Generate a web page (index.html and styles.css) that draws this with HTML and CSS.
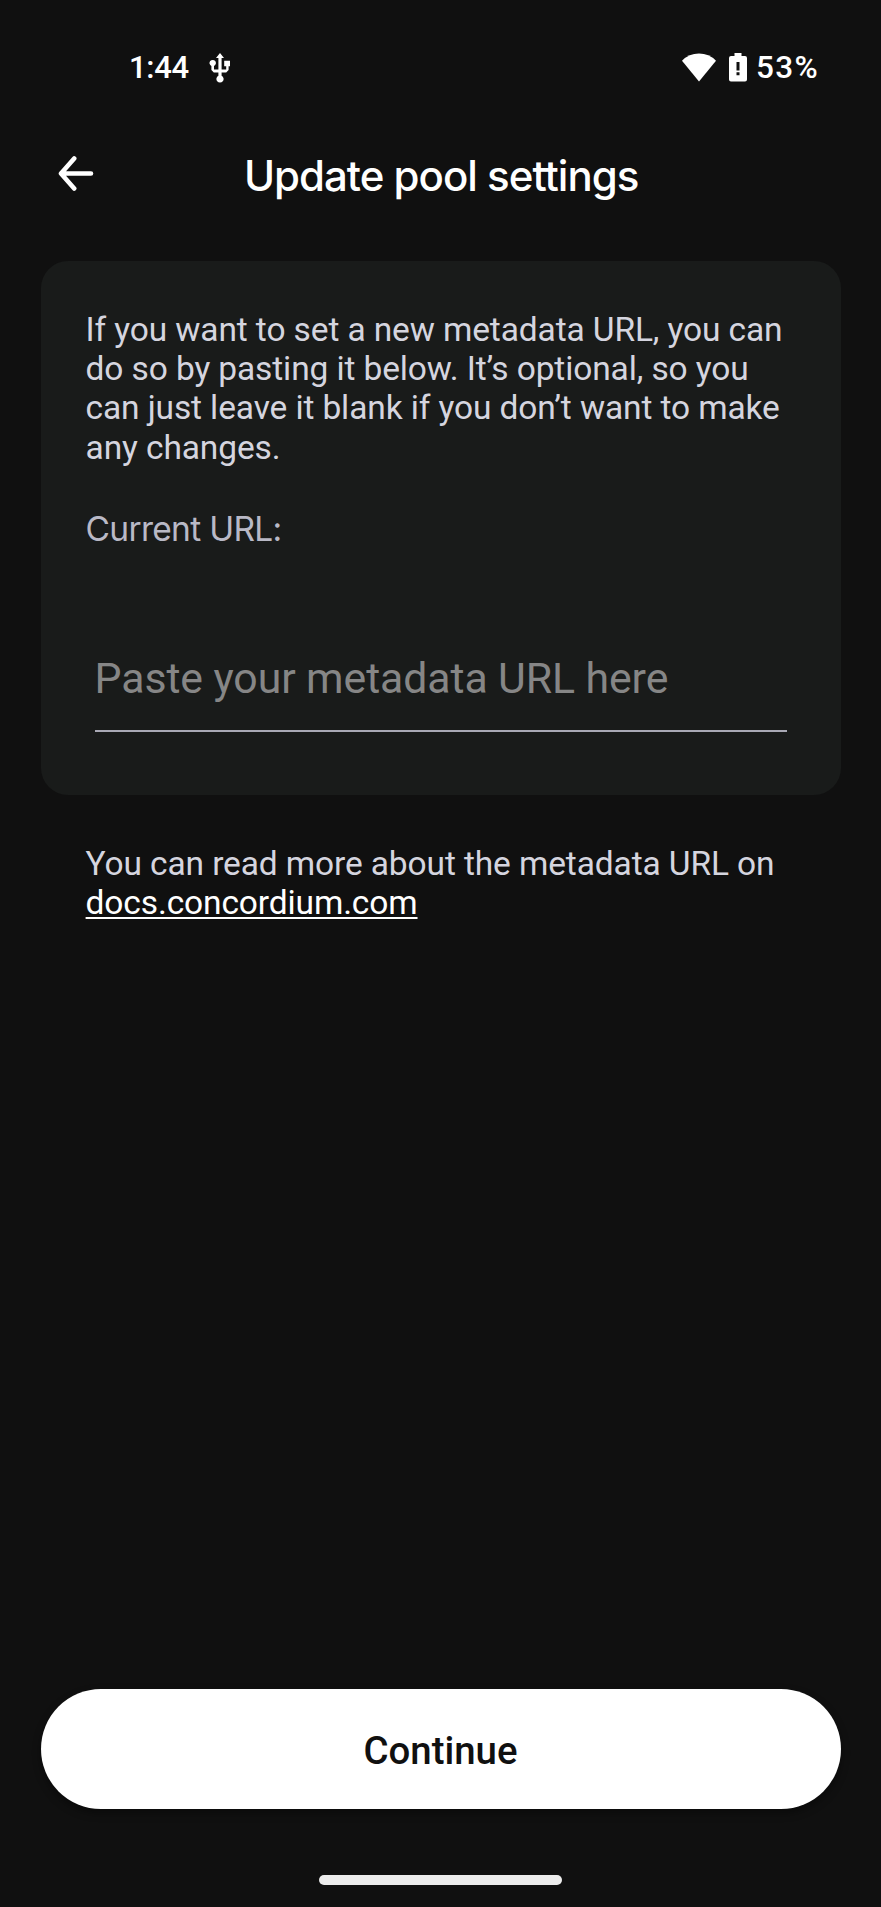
FILE: index.html
```html
<!DOCTYPE html>
<html lang="en">
<head>
<meta charset="utf-8">
<title>Update pool settings</title>
<link rel="stylesheet" href="styles.css">
</head>
<body>
<div class="screen">
  <div class="status">
    <div class="status-left">
      <span class="clock">1:44</span>
      <svg class="usb" width="22" height="32" viewBox="0 0 22 32" fill="#fff">
        <path d="M11 1 15 6H12.600V17.600H17.200V14.200H15.200V8.800H21V14.200H19.600V18L17.200 20.400H12.600V23.800A3.600 3.600 0 1 1 9.400 23.800V20.400H4.800L2.400 18V14A3.200 3.200 0 1 1 5 14V17.600H9.400V6H7Z"/>
      </svg>
    </div>
    <div class="status-right">
      <svg class="wifi" width="34" height="29" viewBox="0 0 34 29" fill="#fff">
        <path d="M17 28.5 0 7.8Q7 .6 17 .6T34 7.8Z"/>
      </svg>
      <svg class="battery" width="18" height="30" viewBox="0 0 18 30">
        <path fill="#fff" d="M5.5 1H12.5V4H16Q18 4 18 6V27.5Q18 29.5 16 29.5H2Q0 29.5 0 27.5V6Q0 4 2 4H5.5Z"/>
        <path fill="#101010" d="M7.5 10H10.500V18.500H7.500ZM7.500 20.300H10.500V23.300H7.500Z"/>
      </svg>
      <span class="percent">53%</span>
    </div>
  </div>
  <header class="header">
    <svg class="back" width="36" height="36" viewBox="0 0 36 36" fill="none" stroke="#fff" stroke-width="4.6" stroke-linecap="round" stroke-linejoin="round">
      <path d="M33 17.500H3M16.200 2.500 3 17.500 16.200 32.500"/>
    </svg>
    <h1 class="title">Update pool settings</h1>
  </header>
  <main class="card">
    <p class="copy">If you want to set a new metadata URL, you can<br>do so by pasting it below. It’s optional, so you<br>can just leave it blank if you don’t want to make<br>any changes.</p>
    <p class="current">Current URL:</p>
    <div class="field">Paste your metadata URL here</div>
  </main>
  <p class="copy more">You can read more about the metadata URL on<br><a class="link" href="#">docs.concordium.com</a></p>
  <button class="continue">Continue</button>
  <div class="home"></div>
</div>
</body>
</html>
```
FILE: styles.css
```css
* { box-sizing: border-box; margin: 0; padding: 0; }
body { background: #101010; font-family: Roboto, sans-serif; color: #fff; }
.screen { width: 881px; height: 1907px; display: flex; flex-direction: column; overflow: hidden; background: #101010; }
.status { display: flex; justify-content: space-between; height: 100px; padding: 48px 62px 0 129px; line-height: 40px; font-size: 31px; font-weight: 500; }
.status-left, .status-right { display: flex; align-items: flex-start; white-space: nowrap; }
.clock { width: 80px; letter-spacing: -0.3px; }
.percent { font-size: 31.5px; letter-spacing: 1.3px; }
.usb { margin-top: 4px; }
.wifi { margin-top: 5px; }
.battery { margin: 4px 9px 0 13px; }
.header { display: flex; height: 161px; padding: 56px 0 0 58px; }
.back { margin-right: 150px; flex: none; }
.title { font: 500 42px/44px Inter, sans-serif; letter-spacing: -1px; white-space: nowrap; margin-top: -2px; }
.card { width: 800px; height: 533.5px; margin-left: 40.6px; padding: 49px 45px 0; border-radius: 27px; background: #191b1a; flex: none; }
.copy { font-size: 33.5px; line-height: 39.2px; letter-spacing: -0.12px; color: #d5d5df; white-space: nowrap; }
.current { margin-top: 42px; font: 400 33.5px/40px Inter, sans-serif; letter-spacing: -0.7px; color: #b9b9c6; }
.field { margin: 104px 9px 0; height: 79.5px; font-size: 42.8px; line-height: 50px; letter-spacing: -0.09px; color: #868686; border-bottom: 2.5px solid #a9a9b5; white-space: nowrap; }
.more { margin: 49px 0 0 85.6px; }
.link { color: #fff; text-underline-offset: 3px; text-decoration-thickness: 2px; text-decoration-skip-ink: none; }
.continue { width: 800px; height: 119.5px; margin: auto 0 0 40.5px; flex: none; border: 0; border-radius: 60px; background: #fff; color: #101010; font: 500 38.4px/44px Roboto, sans-serif; padding-top: 4px; box-shadow: 0 4px 8px rgba(0,0,0,.4); }
.home { width: 243px; height: 9.5px; margin: 66.5px 0 22.5px 319px; flex: none; border-radius: 5px; background: #ececec; }
```
